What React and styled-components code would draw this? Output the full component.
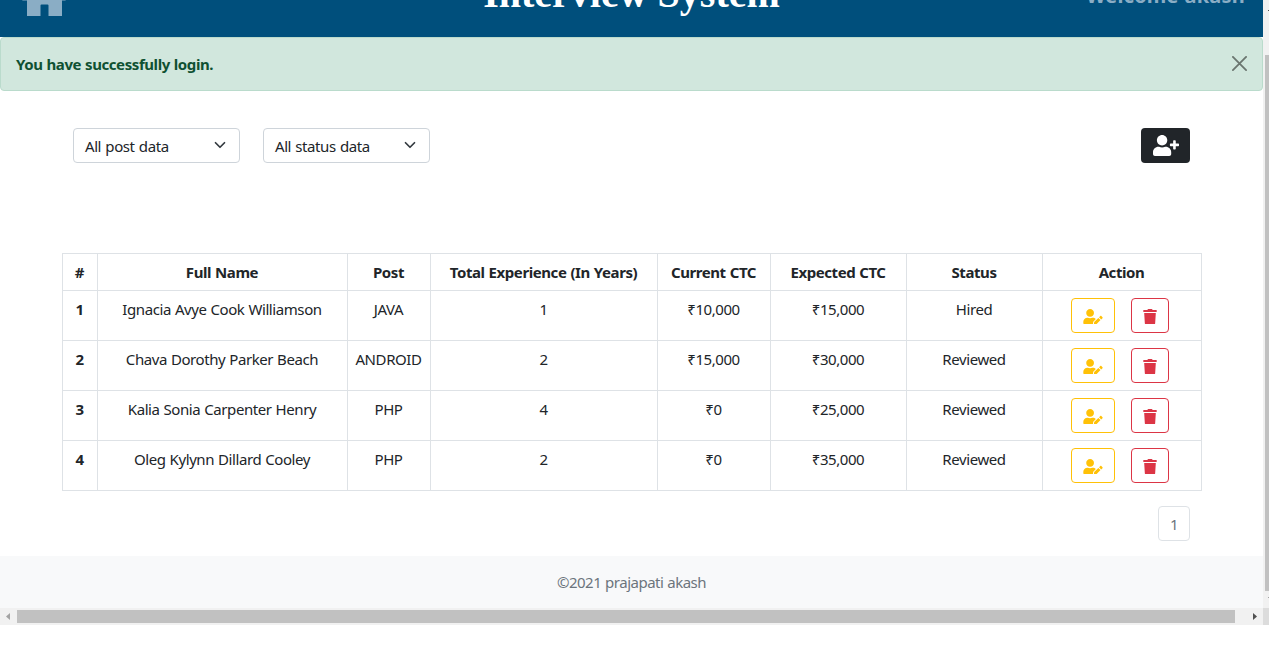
import React from 'react';
import styled, { createGlobalStyle } from 'styled-components';
import { FaUserPlus, FaUserEdit, FaTrash } from 'react-icons/fa';

const GlobalStyle = createGlobalStyle`
  *, *::before, *::after { box-sizing: border-box; }
  body {
    margin: 0;
    background: #fff;
    color: #212529;
    font-family: "Noto Sans", sans-serif;
    font-size: 15px;
    letter-spacing: -0.42px;
    word-spacing: 0.5px;
    line-height: 20px;
    overflow: hidden;
  }
`;

const Screen = styled.div`
  width: 1269px;
  height: 646px;
  overflow: hidden;
  background: #fff;
`;

const Viewport = styled.div`
  display: grid;
  grid-template-columns: 1263px 6px;
  height: 608px;
`;

const Page = styled.div`
  display: flex;
  flex-direction: column;
  min-width: 0;
`;

const Header = styled.header`
  display: grid;
  grid-template-columns: 1fr auto 1fr;
  grid-template-rows: 37px;
  align-items: end;
  height: 37px;
  flex: none;
  overflow: hidden;
  background: #004f7c;
`;

const HomeLink = styled.a`
  display: block;
  height: 40px;
  margin: 0 0 21px 21px;
  color: #8aadc5;
  svg { display: block; }
`;

const Title = styled.h1`
  margin: 0 0 19px;
  color: #fff;
  font: bold 40px/48px "Liberation Serif", serif;
  letter-spacing: 0;
  word-spacing: 0;
  white-space: nowrap;
`;

const Welcome = styled.div`
  justify-self: end;
  margin: 0 18px 26px 0;
  color: #8aadc5;
  font-size: 20px;
  font-weight: 700;
  letter-spacing: 0.2px;
  line-height: 30px;
  white-space: nowrap;
`;

const Alert = styled.div`
  display: flex;
  align-items: center;
  justify-content: space-between;
  flex: none;
  height: 54px;
  padding: 0 15px;
  border: 1px solid #badbcc;
  border-radius: 4px;
  background: #d1e7dd;
  color: #0f5132;
  font-weight: 700;
`;

const CloseButton = styled.button`
  display: flex;
  padding: 0;
  border: 0;
  background: none;
  color: #6a756f;
`;

const Toolbar = styled.div`
  display: flex;
  align-items: center;
  gap: 23px;
  padding: 37px 73px 0;
`;

const Select = styled.button`
  display: flex;
  align-items: center;
  justify-content: space-between;
  width: 167px;
  height: 35px;
  padding: 0 13px 0 11px;
  border: 1px solid #ced4da;
  border-radius: 4px;
  background: #fff;
  color: #212529;
  font: inherit;
  letter-spacing: inherit;
  word-spacing: 0.8px;
  svg { margin-top: -2px; }
`;

const AddButton = styled.button`
  display: flex;
  align-items: center;
  justify-content: center;
  width: 49px;
  height: 35px;
  margin-left: auto;
  padding: 0;
  border: 0;
  border-radius: 4px;
  background: #212529;
  color: #fff;
  svg { width: 26px; height: 21px; }
`;

const Table = styled.table`
  width: 1140px;
  margin: 90px 0 0 62px;
  border-collapse: collapse;
  table-layout: fixed;
  text-align: center;
`;

const Cell = styled.td`
  height: 50px;
  padding: 8px 1px 0 0;
  border: 1px solid #dee2e6;
  vertical-align: top;
  white-space: nowrap;
`;

const HeadCell = styled(Cell)`
  height: 37px;
  font-weight: 700;
`;

const Actions = styled.div`
  display: flex;
  justify-content: center;
  gap: 16px;
  margin: -1px 3px 0 0;
`;

const tones = { warning: '#ffc107', danger: '#dc3545' };

const IconButton = styled.button`
  display: flex;
  align-items: center;
  justify-content: center;
  width: ${(p) => (p.$tone === 'warning' ? 44 : 38)}px;
  height: 35px;
  padding: 2px 0 0;
  border: 1px solid ${(p) => tones[p.$tone]};
  border-radius: 4px;
  background: #fff;
  color: ${(p) => tones[p.$tone]};
  svg {
    width: ${(p) => (p.$tone === 'warning' ? 20 : 14)}px;
    height: 15.5px;
    flex: none;
  }
`;

const Pagination = styled.nav`
  display: flex;
  justify-content: flex-end;
  padding: 15px 73px 0 0;
`;

const PageLink = styled.a`
  width: 32px;
  height: 35px;
  padding-top: 7px;
  border: 1px solid #dee2e6;
  border-radius: 4px;
  color: #6c757d;
  text-align: center;
`;

const Footer = styled.footer`
  height: 52px;
  margin-top: auto;
  padding-top: 16px;
  background: #f8f9fa;
  color: #6c757d;
  text-align: center;
  letter-spacing: -0.5px;
`;

const VerticalTrack = styled.div`
  display: flex;
  flex-direction: column;
  justify-content: space-between;
  padding: 10px 0 10px;
  background: #f1f1f1;
`;

const Tick = styled.i`
  width: 1px;
  height: 1px;
  margin-left: 5px;
  background: ${(p) => p.$color};
`;

const VerticalThumb = styled.div`
  height: 536px;
  margin: 44px 0 6px 2px;
  background: #c1c1c1;
`;

const HorizontalTrack = styled.div`
  display: grid;
  grid-template-columns: 17px 1218px 28px 6px;
  align-items: center;
  height: 17px;
  background: #f1f1f1;
`;

const ArrowSlot = styled.div`
  display: flex;
  padding-left: ${(p) => p.$inset}px;
`;

const HorizontalThumb = styled.div`
  height: 13px;
  background: #c1c1c1;
`;

const Corner = styled.div`
  height: 17px;
  background: #dcdcdc;
`;

const columns = [
  ['#', 35], ['Full Name', 250], ['Post', 83], ['Total Experience (In Years)', 227],
  ['Current CTC', 113], ['Expected CTC', 136], ['Status', 136], ['Action', 159],
];

const candidates = [
  ['Ignacia Avye Cook Williamson', 'JAVA', 1, '₹10,000', '₹15,000', 'Hired'],
  ['Chava Dorothy Parker Beach', 'ANDROID', 2, '₹15,000', '₹30,000', 'Reviewed'],
  ['Kalia Sonia Carpenter Henry', 'PHP', 4, '₹0', '₹25,000', 'Reviewed'],
  ['Oleg Kylynn Dillard Cooley', 'PHP', 2, '₹0', '₹35,000', 'Reviewed'],
];

const Chevron = () => (
  <svg width="12" height="12" viewBox="0 0 16 16" fill="none" stroke="#343a40" strokeWidth="2.3" strokeLinecap="round" strokeLinejoin="round">
    <path d="M2 5l6 6 6-6" />
  </svg>
);

export default function App() {
  return (
    <Screen>
      <GlobalStyle />
      <Viewport>
        <Page>
          <Header>
            <HomeLink aria-label="Home">
              <svg width="46" height="40" viewBox="0 0 46 40" fill="currentColor">
                <path d="M23 0L45 20.5Q47 24 44 24.4H41V39.5Q41 40 40.5 40H27.5V29.5Q27.5 28.5 26.5 28.5H20.5Q19.5 28.5 19.5 29.5V40H6.5Q6 40 6 39.5V24.4H2Q-1 24 1 20.5Z" />
              </svg>
            </HomeLink>
            <Title>Interview System</Title>
            <Welcome>Welcome akash</Welcome>
          </Header>
          <Alert role="alert">
            <span>You have successfully login.</span>
            <CloseButton aria-label="Close">
              <svg width="15" height="16" viewBox="0 0 15 16" stroke="currentColor" strokeWidth="1.8" strokeLinecap="round">
                <path d="M0.9 0.9l13.2 13.2M14.1 0.9L0.9 14.1" />
              </svg>
            </CloseButton>
          </Alert>
          <Toolbar>
            <Select>All post data<Chevron /></Select>
            <Select>All status data<Chevron /></Select>
            <AddButton aria-label="Add candidate"><FaUserPlus /></AddButton>
          </Toolbar>
          <Table>
            <colgroup>
              {columns.map(([name, width]) => <col key={name} width={width} />)}
            </colgroup>
            <thead>
              <tr>{columns.map(([name]) => <HeadCell as="th" key={name}>{name}</HeadCell>)}</tr>
            </thead>
            <tbody>
              {candidates.map((row, i) => (
                <tr key={row[0]}>
                  <Cell as="th">{i + 1}</Cell>
                  {row.map((value, j) => <Cell key={j}>{value}</Cell>)}
                  <Cell>
                    <Actions>
                      <IconButton $tone="warning" aria-label="Edit"><FaUserEdit /></IconButton>
                      <IconButton $tone="danger" aria-label="Delete"><FaTrash /></IconButton>
                    </Actions>
                  </Cell>
                </tr>
              ))}
            </tbody>
          </Table>
          <Pagination><PageLink>1</PageLink></Pagination>
          <Footer>©2021 prajapati akash</Footer>
        </Page>
        <VerticalTrack>
          <Tick $color="#505050" />
          <VerticalThumb />
          <Tick $color="#a3a3a3" />
        </VerticalTrack>
      </Viewport>
      <HorizontalTrack>
        <ArrowSlot $inset={6}>
          <svg width="4" height="7" viewBox="0 0 4 7" fill="#a3a3a3"><path d="M4 0v7L0 3.5z" /></svg>
        </ArrowSlot>
        <HorizontalThumb />
        <ArrowSlot $inset={18}>
          <svg width="4" height="7" viewBox="0 0 4 7" fill="#505050"><path d="M0 0v7l4-3.5z" /></svg>
        </ArrowSlot>
        <Corner />
      </HorizontalTrack>
    </Screen>
  );
}
